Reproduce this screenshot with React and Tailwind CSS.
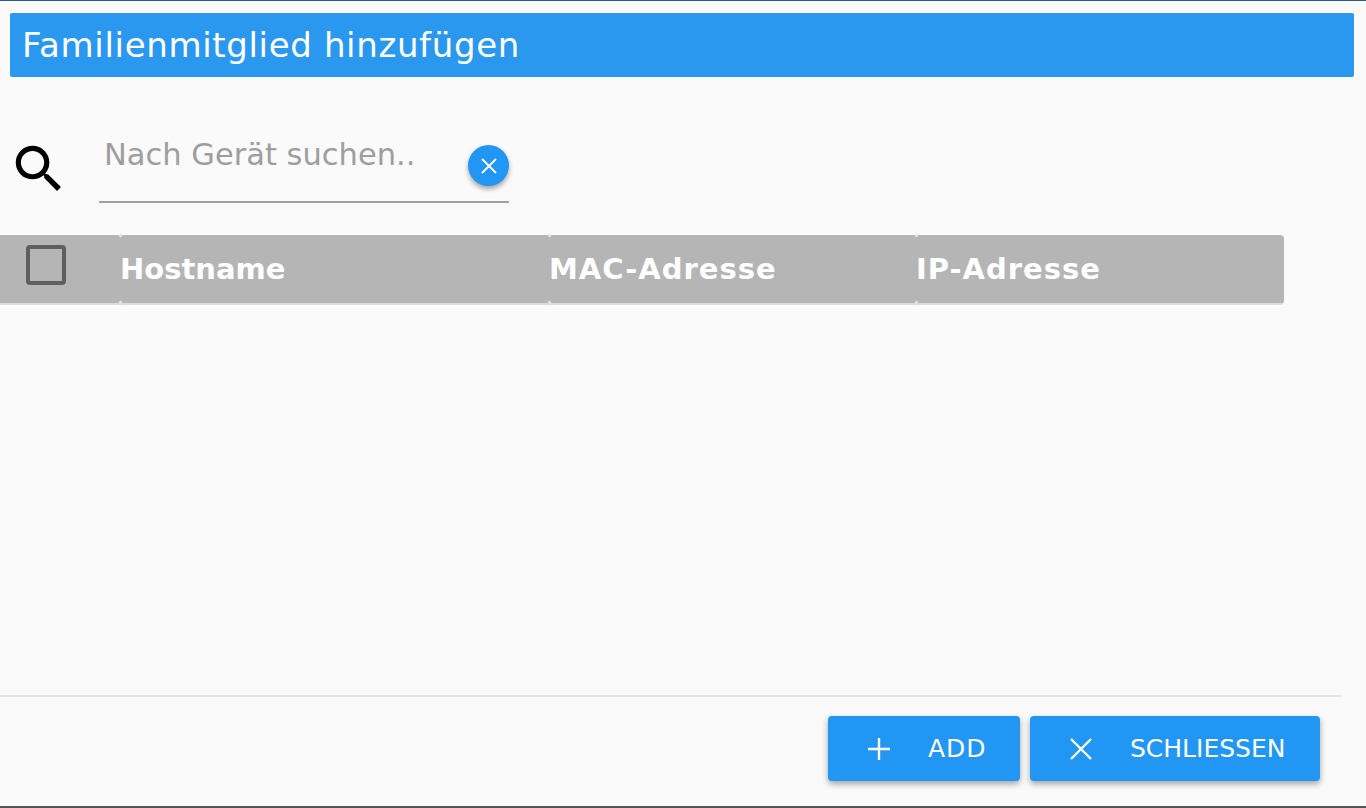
import React from "react";

const font = { fontFamily: '"DejaVu Sans", "Noto Sans", sans-serif' };

const Corner = ({ className }) => (
  <span className={`absolute left-[-2px] w-[3px] h-[3px] rotate-45 bg-[#e4e4e4] ${className}`} />
);

const HeaderCell = ({ width, tracking, title }) => (
  <div className={`relative flex items-center h-full ${width} ${tracking} text-[29px] font-bold text-white`}>
    <Corner className="top-[-1px]" />
    <Corner className="bottom-[-1px]" />
    <span className="-ml-px mt-[2px]">{title}</span>
  </div>
);

const ActionButton = ({ width, pad, iconGap, tracking, icon, label }) => (
  <button className={`flex items-center h-[65px] ${width} ${pad} ${iconGap} ${tracking} rounded-[4px] bg-[#2196f3] text-white text-[25px] shadow-[0_3px_6px_rgba(0,0,0,0.35)]`}>
    {icon}
    <span>{label}</span>
  </button>
);

const App = () => {
  return (
    <div className="h-[808px] w-[1366px] overflow-hidden flex flex-col bg-[#fafafa] border-t border-t-[#2b5a80] border-b-2 border-b-[#555555]" style={font}>
      <div className="mt-3 ml-[10px] w-[1344px] h-[64px] flex items-center pl-3 bg-[#2b98f0] rounded-[2px] text-[34px] tracking-[0.65px] text-white">
        Familienmitglied hinzufügen
      </div>

      {/* Search */}
      <div className="mt-[60px] h-[66px] flex items-start">
        <svg className="ml-[8px] mt-[1px] w-[62px] h-[62px]" viewBox="0 0 24 24" fill="#000">
          <path d="M15.5 14h-.79l-.28-.27A6.471 6.471 0 0 0 16 9.5 6.5 6.5 0 1 0 9.5 16c1.61 0 3.09-.59 4.23-1.57l.27.28v.79l5 4.99L20.49 19l-4.99-5zm-6 0C7.01 14 5 11.99 5 9.5S7.01 5 9.5 5 14 7.01 14 9.5 11.99 14 9.5 14z" />
        </svg>
        <div className="relative ml-[29px] w-[410px] h-[66px] border-b-2 border-b-[#a0a0a0]">
          <span className="absolute left-[5px] top-[-5px] text-[30.5px] text-[#9e9e9e]">Nach Gerät suchen..</span>
          <button className="absolute right-0 top-[8px] w-[41px] h-[41px] flex items-center justify-center rounded-full bg-[#2196f3] shadow-[0_3px_5px_rgba(0,0,0,0.35)]">
            <svg className="w-[24px] h-[24px]" viewBox="0 0 24 24" stroke="#fff" strokeWidth="1.8" fill="none">
              <path d="M5 5l14 14M19 5L5 19" />
            </svg>
          </button>
        </div>
      </div>

      {/* Table header */}
      <div className="mt-[32px] w-[1284px] h-[70px] flex bg-[#b5b5b5] rounded-r-[4px] border-b-2 border-b-[#dcdcdc]">
        <div className="w-[121px] h-full flex items-start pt-[10px] pl-[26px]">
          <div className="w-[40px] h-[40px] rounded-[4px] border-[4px] border-[#5f5f5f]" />
        </div>
        <HeaderCell width="w-[429px]" tracking="tracking-normal" title="Hostname" />
        <HeaderCell width="w-[367px]" tracking="tracking-[1px]" title="MAC-Adresse" />
        <HeaderCell width="w-[367px]" tracking="tracking-[1px]" title="IP-Adresse" />
      </div>

      <div className="flex-1" />

      {/* Footer */}
      <div className="w-[1341px] h-[2px] bg-[#e3e3e3]" />
      <div className="h-[109px] pt-[19px] pr-[46px] flex justify-end gap-[10px]">
        <ActionButton
          width="w-[192px]"
          pad="pl-[39px]"
          iconGap="gap-[37px]"
          tracking="tracking-[1px]"
          label="ADD"
          icon={
            <svg className="w-[24px] h-[24px]" viewBox="0 0 24 24" stroke="#fff" strokeWidth="2.4" fill="none">
              <path d="M12 1v22M1 12h22" />
            </svg>
          }
        />
        <ActionButton
          width="w-[290px]"
          pad="pl-[39px]"
          iconGap="gap-[37px]"
          tracking="tracking-normal"
          label="SCHLIESSEN"
          icon={
            <svg className="w-[24px] h-[24px]" viewBox="0 0 24 24" stroke="#fff" strokeWidth="2.4" fill="none">
              <path d="M2 2l20 20M22 2L2 22" />
            </svg>
          }
        />
      </div>
    </div>
  );
};

export default App;
